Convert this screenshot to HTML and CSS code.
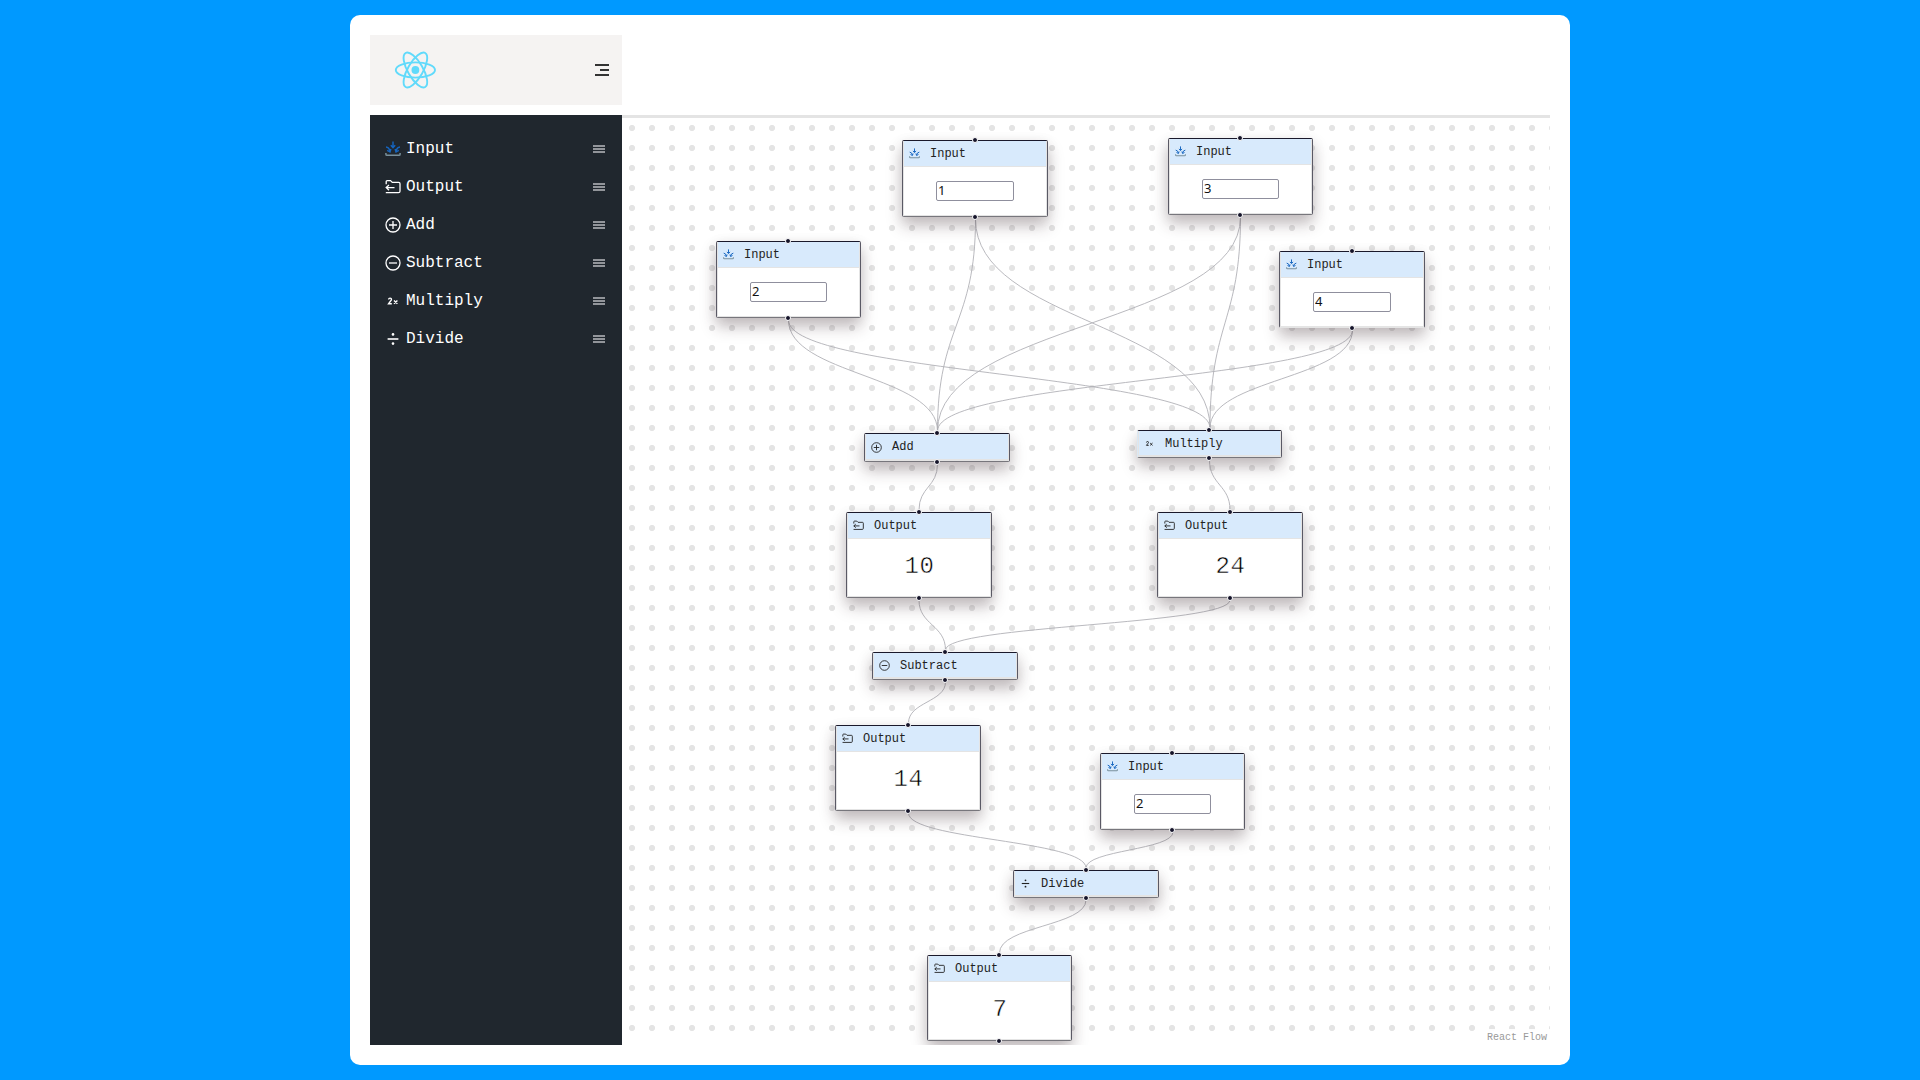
FILE: index.html
```
<!DOCTYPE html>
<html lang="en">
<head>
<meta charset="utf-8">
<title>Flow calculator</title>
<link rel="stylesheet" href="styles.css">
</head>
<body>
<svg class="sprite" aria-hidden="true">
  <symbol id="i-input" viewBox="0 0 16 16"><g fill="none" stroke="#1565c0" stroke-width="1.4"><path d="M8 .6v5.4M5.8 4.2 8 6.7l2.2-2.5M1 6q3 .2 4 4.2M2.2 9.4 5 11 5.9 8M15 6q-3 .2-4 4.2M13.8 9.4 11 11 10.1 8"/></g><path d="M.9 12v1.2q0 1.1 1.1 1.1h12q1.1 0 1.1-1.1V12" fill="none" stroke="#78909c" stroke-width="1.5"/></symbol>
  <symbol id="i-output" viewBox="0 0 16 16"><path d="M1.2 5.2V2.6q0-1 1-1h3.3L7.3 3.4h6.4q1.3 0 1.3 1.3v7.5q0 1.5-1.5 1.5H.8M9.5 8.6H1.2M4 6 1.2 8.6 4 11.2" fill="none" stroke="currentColor" stroke-width="1.3"/></symbol>
  <symbol id="i-add" viewBox="0 0 16 16"><path d="M8 4v8M4 8h8" stroke="currentColor" stroke-width="1.3"/><circle cx="8" cy="8" r="7" fill="none" stroke="currentColor" stroke-width="1.3"/></symbol>
  <symbol id="i-subtract" viewBox="0 0 16 16"><path d="M4 8h8" stroke="currentColor" stroke-width="1.3"/><circle cx="8" cy="8" r="7" fill="none" stroke="currentColor" stroke-width="1.3"/></symbol>
  <symbol id="i-multiply" viewBox="0 0 16 16"><path d="M3.6 6.5q.1-1.4 1.5-1.4t1.4 1.2q0 .9-1.1 2L3.6 10.7h3.2M9 7.4l3.4 3.3M12.4 7.4 9 10.7" fill="none" stroke="currentColor" stroke-width="1.4"/></symbol>
  <symbol id="i-divide" viewBox="0 0 16 16"><path d="M2.6 8h10.8" stroke="currentColor" stroke-width="1.6"/><circle cx="8" cy="3.4" r="1.3" fill="currentColor"/><circle cx="8" cy="12.6" r="1.3" fill="currentColor"/></symbol>
  <symbol id="i-grip" viewBox="0 0 12 8"><path d="M0 1h12M0 4h12M0 7h12" stroke="currentColor" stroke-width="2"/></symbol>
</svg>
<main class="frame">
  <header class="brand">
    <svg class="logo" viewBox="-21.4 -21 42 42"><g fill="none" stroke="#61dafb" stroke-width="1.9"><ellipse rx="19.6" ry="7.6"/><ellipse rx="19.6" ry="7.6" transform="rotate(60)"/><ellipse rx="19.6" ry="7.6" transform="rotate(120)"/></g><circle r="3.9" fill="#61dafb"/></svg>
    <svg class="menu" viewBox="0 0 14 12"><path d="M0 1h14M5 6h9M0 11h14" stroke="#333" stroke-width="2"/></svg>
  </header>
  <div class="body">
    <nav class="side">
      <div class="item"><svg class="ico"><use href="#i-input"/></svg><span>Input</span><svg class="grip"><use href="#i-grip"/></svg></div>
      <div class="item"><svg class="ico"><use href="#i-output"/></svg><span>Output</span><svg class="grip"><use href="#i-grip"/></svg></div>
      <div class="item"><svg class="ico"><use href="#i-add"/></svg><span>Add</span><svg class="grip"><use href="#i-grip"/></svg></div>
      <div class="item"><svg class="ico"><use href="#i-subtract"/></svg><span>Subtract</span><svg class="grip"><use href="#i-grip"/></svg></div>
      <div class="item"><svg class="ico"><use href="#i-multiply"/></svg><span>Multiply</span><svg class="grip"><use href="#i-grip"/></svg></div>
      <div class="item"><svg class="ico"><use href="#i-divide"/></svg><span>Divide</span><svg class="grip"><use href="#i-grip"/></svg></div>
    </nav>
    <section class="canvas">
      <svg class="edges" viewBox="0 0 928 927">
        <path d="M353.5 101C353.5 207 315.5 207 315.5 313"/>
        <path d="M353.5 101C353.5 205 588 205 588 310"/>
        <path d="M166.5 202C166.5 257 315.5 257 315.5 313"/>
        <path d="M166.5 202C166.5 256 588 256 588 310"/>
        <path d="M618.5 99C618.5 206 315.5 206 315.5 313"/>
        <path d="M618.5 99C618.5 204 588 204 588 310"/>
        <path d="M730.5 212C730.5 262 315.5 262 315.5 313"/>
        <path d="M730.5 212C730.5 261 588 261 588 310"/>
        <path d="M315.5 346C315.5 369 297 369 297 392"/>
        <path d="M587.5 342C587.5 367 608 367 608 392"/>
        <path d="M297 482C297 507 323.5 507 323.5 532"/>
        <path d="M608 482C608 507 323.5 507 323.5 532"/>
        <path d="M323.5 564C323.5 584 286.5 584 286.5 605"/>
        <path d="M286.5 695C286.5 722 464 722 464 750"/>
        <path d="M551 714C551 732 464 732 464 750"/>
        <path d="M464 782C464 808 377.5 808 377.5 835"/>
      </svg>
      <article class="node input n-in1"><h3><svg><use href="#i-input"/></svg>Input</h3><div class="value"><input value="1"></div></article>
      <article class="node input narrow n-in2"><h3><svg><use href="#i-input"/></svg>Input</h3><div class="value"><input value="2"></div></article>
      <article class="node input narrow n-in3"><h3><svg><use href="#i-input"/></svg>Input</h3><div class="value"><input value="3"></div></article>
      <article class="node input n-in4"><h3><svg><use href="#i-input"/></svg>Input</h3><div class="value"><input value="4"></div></article>
      <article class="node op n-add"><h3><svg><use href="#i-add"/></svg>Add</h3></article>
      <article class="node op narrow n-mul"><h3><svg><use href="#i-multiply"/></svg>Multiply</h3></article>
      <article class="node output n-out10"><h3><svg><use href="#i-output"/></svg>Output</h3><div class="value">10</div></article>
      <article class="node output n-out24"><h3><svg><use href="#i-output"/></svg>Output</h3><div class="value">24</div></article>
      <article class="node op n-sub"><h3><svg><use href="#i-subtract"/></svg>Subtract</h3></article>
      <article class="node output n-out14"><h3><svg><use href="#i-output"/></svg>Output</h3><div class="value">14</div></article>
      <article class="node input narrow n-in5"><h3><svg><use href="#i-input"/></svg>Input</h3><div class="value"><input value="2"></div></article>
      <article class="node op n-div"><h3><svg><use href="#i-divide"/></svg>Divide</h3></article>
      <article class="node output narrow n-out7"><h3><svg><use href="#i-output"/></svg>Output</h3><div class="value">7</div></article>
      <span class="credit">React Flow</span>
    </section>
  </div>
</main>
</body>
</html>
```
FILE: styles.css
```
*, *::before, *::after { box-sizing: border-box; }
body {
  margin: 0;
  height: 1080px;
  padding: 15px 350px;
  background: #0099ff;
  font-family: "Courier New", "Liberation Mono", monospace;
  overflow: hidden;
}
svg { display: block; flex: none; }
.sprite { display: none; }
.frame {
  height: 1050px;
  padding: 20px;
  border-radius: 10px;
  background: #fff;
  display: flex;
  flex-direction: column;
  gap: 10px;
}
.brand {
  width: 252px;
  height: 70px;
  padding: 0 13px 0 24px;
  background: #f5f3f2;
  display: flex;
  align-items: center;
  justify-content: space-between;
}
.logo { width: 42px; height: 42px; }
.menu { width: 14px; height: 12px; }
.body { display: flex; height: 930px; }
.side {
  width: 252px;
  padding-top: 15px;
  background: #20272e;
  color: #fff;
}
.item {
  height: 38px;
  padding: 0 17px 0 15px;
  display: flex;
  align-items: center;
  font-size: 16px;
}
.ico { width: 16px; height: 16px; margin: -1px 5px 0 0; }
.grip { width: 12px; height: 8px; margin-left: auto; color: #92959a; }

.canvas {
  position: relative;
  flex: 1;
  border-top: 3px solid #e4e4e4;
  overflow: hidden;
  background: radial-gradient(circle at center, #e4e4e4 2.7px, transparent 3.5px) 0 0 / 20px 20px;
}
.edges { width: 928px; height: 927px; }
.edges path { fill: none; stroke: #b1b1b7; stroke-width: .9; }

.node {
  position: absolute;
  width: 146px;
  border: 1px solid #5a5965;
  border-top-color: #1a192b;
  border-bottom-color: #77767c;
  border-radius: 2px;
  background: #fff;
  box-shadow: 0 9px 16px rgba(55, 35, 40, .27), 0 3px 14px rgba(0, 0, 0, .08);
  color: #222;
  display: flex;
  flex-direction: column;
}
.narrow { width: 145px; }
.input { height: 77px; }
.output { height: 86px; }
.op { height: 28px; }
.n-in1 { left: 280px; top: 22px; }
.n-in2 { left: 94px; top: 123px; }
.n-in3 { left: 546px; top: 20px; }
.n-in4 { left: 657px; top: 133px; border-bottom-color: #e4e4e4; }
.n-add { left: 242px; top: 315px; height: 29px; }
.n-mul { left: 515px; top: 312px; border-left-color: #dbe8f3; }
.n-out10 { left: 224px; top: 394px; }
.n-out24 { left: 535px; top: 394px; }
.n-sub { left: 250px; top: 534px; }
.n-out14 { left: 213px; top: 607px; }
.n-in5 { left: 478px; top: 635px; }
.n-div { left: 391px; top: 752px; }
.n-out7 { left: 305px; top: 837px; }

/* connection handles on the top and bottom edges */
.node::before, .node::after {
  content: "";
  position: absolute;
  left: 69px;
  width: 6px;
  height: 6px;
  border: 1px solid #fff;
  border-radius: 50%;
  background: #15142a;
}
.node.narrow::before, .node.narrow::after { left: 68px; }
.node::before { top: -4px; }
.node::after { bottom: -4px; }

.node h3 {
  margin: 0;
  height: 26px;
  padding: 0 5px;
  display: flex;
  align-items: center;
  gap: 10px;
  background: #d8eafc;
  border: solid #e4e4e4;
  border-width: 0 1px 1px;
  font-size: 12px;
  font-weight: 400;
}
.op h3 { height: 100%; padding-top: 1px; border-bottom-width: 2px; }
.node h3 svg { width: 11px; height: 11px; }
.value {
  flex: 1;
  border: solid #e4e4e4;
  border-width: 0 1px 1px;
  display: flex;
  align-items: center;
  justify-content: center;
  font-size: 24px;
}
.output .value {
  padding: 0 0 2px 1px;
  color: #000;
  letter-spacing: .5px;
  /* a white outline over the fill thins the digits */
  -webkit-text-stroke: .5px #fff;
}
.input .value { padding-bottom: 1px; }
.value input {
  width: 78px;
  height: 20px;
  padding: 0 1px 1px;
  border: 1px solid #8f8f9d;
  border-radius: 2px;
  background: #fff;
  font: 13px "Noto Sans", sans-serif;
  color: #111;
}
.narrow .value input { width: 77px; }
.credit {
  position: absolute;
  right: 0;
  bottom: 0;
  padding: 3px 3px 2px 2px;
  background: rgba(255, 255, 255, .9);
  font-size: 10px;
  line-height: 11px;
  color: #999;
}
```
